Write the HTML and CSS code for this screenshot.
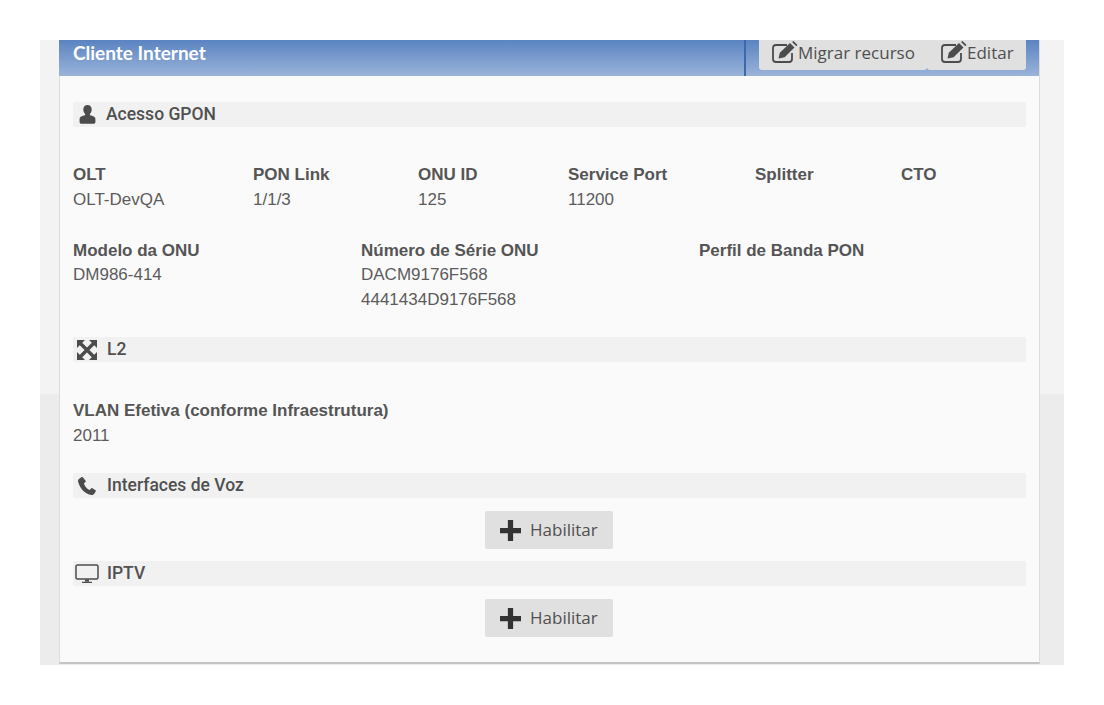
FILE: index.html
```html
<!DOCTYPE html>
<html lang="pt">
<head>
    <meta charset="UTF-8">
    <title>Cliente Internet</title>
    <link rel="stylesheet" href="styles.css">
</head>
<body>
    <div class="page">
        <div class="card">
            <div class="card-head">
                <h1 class="card-title">Cliente Internet</h1>
                <div class="head-line"></div>
                <div class="head-btns">
                    <a class="head-btn btn-migrar">
                        <svg class="ico-edit" viewBox="0 0 26 22"><path d="M15 4H4a3 3 0 0 0-3 3v11a3 3 0 0 0 3 3h13a3 3 0 0 0 3-3v-6" fill="none" stroke="#4c4c4c" stroke-width="1.8"/><path d="M6.500 17.500l1.300-5.800L18 2l4.500 4.500-9.900 9.800z" fill="#4c4c4c"/><path d="M20 1l1.500-1 4 4-1.200 1.300z" fill="#4c4c4c"/></svg>
                        <span>Migrar recurso</span>
                    </a>
                    <a class="head-btn btn-editar">
                        <svg class="ico-edit" viewBox="0 0 26 22"><path d="M15 4H4a3 3 0 0 0-3 3v11a3 3 0 0 0 3 3h13a3 3 0 0 0 3-3v-6" fill="none" stroke="#4c4c4c" stroke-width="1.8"/><path d="M6.500 17.500l1.300-5.800L18 2l4.500 4.500-9.900 9.800z" fill="#4c4c4c"/><path d="M20 1l1.500-1 4 4-1.200 1.300z" fill="#4c4c4c"/></svg>
                        <span>Editar</span>
                    </a>
                </div>
            </div>

            <div class="card-body">
                <div class="section">
                    <svg class="sec-ico ico-user" viewBox="0 0 16 18"><path d="M8 0c2.500 0 4 1.800 4 4.300 0 1.700-.7 3.200-1.700 4.100v1.300c2.800.6 5.200 1.500 5.200 3.600V16c0 1-.8 1.700-1.700 1.700H2.200C1.300 17.700.5 17 .5 16v-2.700c0-2.100 2.400-3 5.200-3.600V8.400C4.700 7.500 4 6 4 4.300 4 1.800 5.500 0 8 0z" fill="#4c4c4c"/></svg>
                    <span class="sec-title">Acesso GPON</span>
                </div>

                <div class="row row-olt">
                    <div class="col w180"><div class="lbl">OLT</div><div class="val">OLT-DevQA</div></div>
                    <div class="col w165"><div class="lbl">PON Link</div><div class="val">1/1/3</div></div>
                    <div class="col w149"><div class="lbl">ONU ID</div><div class="val">125</div></div>
                    <div class="col w188"><div class="lbl">Service Port</div><div class="val">11200</div></div>
                    <div class="col w146"><div class="lbl">Splitter</div></div>
                    <div class="col"><div class="lbl">CTO</div></div>
                </div>

                <div class="row row-onu">
                    <div class="col w287"><div class="lbl">Modelo da ONU</div><div class="val">DM986-414</div></div>
                    <div class="col w339"><div class="lbl">Número de Série ONU</div><div class="val">DACM9176F568</div><div class="val">4441434D9176F568</div></div>
                    <div class="col"><div class="lbl">Perfil de Banda PON</div></div>
                </div>

                <div class="section sec-l2">
                    <svg class="sec-ico ico-full" viewBox="0 0 20 20"><path d="M0 0h8L0 8zM20 0v8l-8-8zM20 20h-8l8-8zM0 20v-8l8 8z" fill="#4c4c4c"/><path d="M3 3l14 14M17 3L3 17" stroke="#4c4c4c" stroke-width="3.400" fill="none"/></svg>
                    <span class="sec-title">L2</span>
                </div>

                <div class="row row-vlan">
                    <div class="col"><div class="lbl">VLAN Efetiva (conforme Infraestrutura)</div><div class="val">2011</div></div>
                </div>

                <div class="section sec-voz">
                    <svg class="sec-ico ico-phone" viewBox="0 0 18 18"><path d="M3.300.3L.9 1.900C.1 2.600-.2 3.600.1 4.800c.9 3.500 2.600 6.500 5 8.900 2.300 2.300 5.200 3.800 8.300 4.200 1.200.1 2.200-.3 2.800-1.200l1.500-2.200c.3-.5.2-1-.2-1.300l-3.100-2c-.4-.3-.9-.2-1.300.2l-1.500 1.500c-1.300-.5-2.500-1.400-3.500-2.500S6.300 7.900 5.900 6.500l1.500-1.400c.4-.4.500-.9.200-1.300L5 .5C4.500 0 3.800-.1 3.300.3z" fill="#4c4c4c"/></svg>
                    <span class="sec-title">Interfaces de Voz</span>
                </div>
                <div class="btn-row">
                    <a class="btn-add">
                        <svg class="ico-plus" viewBox="0 0 20 20"><path d="M7.500 0h5v7.500H20v5h-7.500V20h-5v-7.500H0v-5h7.500z" fill="#333"/></svg>
                        <span>Habilitar</span>
                    </a>
                </div>

                <div class="section sec-iptv">
                    <svg class="sec-ico ico-tv" viewBox="0 0 24 20"><rect x="1" y="1" width="22" height="14" rx="1.500" fill="none" stroke="#4c4c4c" stroke-width="1.500"/><path d="M10 15.500h4v2h-4zM7 17.800h10v1.200H7z" fill="#4c4c4c"/></svg>
                    <span class="sec-title">IPTV</span>
                </div>
                <div class="btn-row">
                    <a class="btn-add">
                        <svg class="ico-plus" viewBox="0 0 20 20"><path d="M7.500 0h5v7.500H20v5h-7.500V20h-5v-7.500H0v-5h7.500z" fill="#333"/></svg>
                        <span>Habilitar</span>
                    </a>
                </div>
            </div>
        </div>
    </div>
</body>
</html>
```

FILE: styles.css
```css
*{
    margin: 0;
    padding: 0;
    box-sizing: border-box;
}
body{
    background: #fff;
    padding: 40px;
    font-family: "Liberation Sans", Arial, sans-serif;
    color: #555;
}
.page{
    height: 625px;
    padding: 0 24px 1px 19px;
    background: linear-gradient(#f3f3f3 354px, #ececec 354px);
}
.card{
    height: 624px;
    background: #fafafa;
    border: solid #dcdcdc;
    border-width: 0 1px 2px 1px;
    border-bottom-color: #c4c4c4;
}
.card-head{
    height: 36px;
    display: flex;
    align-items: flex-start;
    background: linear-gradient(#5a84c1, #9ab3d9);
    margin-left: -1px;
    padding-left: 14px;
}
.card-title{
    font: bold 19px/26px Lato, sans-serif;
    color: #fff;
    width: 671px;
}
.head-line{
    width: 2px;
    height: 36px;
    background: #3c69ad;
}
.head-btns{
    display: flex;
    margin-left: 13px;
    height: 30px;
    font: 17px/26px "Open Sans", sans-serif;
    color: #4f4f4f;
}
.head-btn{
    display: flex;
    align-items: flex-start;
    background: #e0e0e0;
    border-radius: 0 0 3px 3px;
}
.btn-migrar{
    width: 168px;
    padding-left: 13px;
}
.btn-editar{
    width: 99px;
    padding-left: 14px;
}
.ico-edit{
    width: 26px;
    height: 22px;
    flex: none;
    margin-top: 1px;
}
.card-body{
    padding: 26px 13px 0 13px;
}
.section{
    height: 25px;
    display: flex;
    align-items: center;
    background: #f1f1f1;
}
.sec-title{
    font: 500 17.5px/22px Roboto, sans-serif;
    color: #505050;
    margin-bottom: 2px;
}
.sec-ico{
    flex: none;
}
.ico-user{
    width: 17px;
    height: 19px;
    margin: 0 10px 0 6px;
}
.ico-full{
    width: 20px;
    height: 20px;
    margin: 0 10px 0 4px;
}
.ico-phone{
    width: 18px;
    height: 18px;
    margin: 0 11px 0 5px;
}
.ico-tv{
    width: 24px;
    height: 20px;
    margin: 0 8px 0 2px;
}
.row{
    display: flex;
    font-size: 17px;
    line-height: 25px;
}
.row-olt{
    margin-top: 35px;
}
.row-onu{
    margin-top: 26px;
}
.row-onu .lbl{
    margin-bottom: -1px;
}
.row-vlan{
    margin-top: 36px;
}
.sec-l2{
    margin-top: 25px;
}
.sec-voz{
    margin-top: 25px;
}
.sec-iptv{
    margin-top: 12px;
}
.w180{ width: 180px; }
.w165{ width: 165px; }
.w149{ width: 150px; }
.w188{ width: 187px; }
.w146{ width: 146px; }
.w287{ width: 288px; }
.w339{ width: 338px; }
.lbl{
    font-weight: bold;
    color: #555;
}
.val{
    color: #5c5c5c;
}
.btn-row{
    display: flex;
    justify-content: center;
    margin-top: 13px;
    padding-right: 1px;
}
.btn-add{
    width: 128px;
    height: 38px;
    display: flex;
    align-items: center;
    padding-left: 15px;
    gap: 9px;
    background: #e0e0e0;
    border-radius: 2px;
    font: 17px/26px "Open Sans", sans-serif;
    color: #505050;
}
.ico-plus{
    width: 21px;
    height: 21px;
    flex: none;
}
```
